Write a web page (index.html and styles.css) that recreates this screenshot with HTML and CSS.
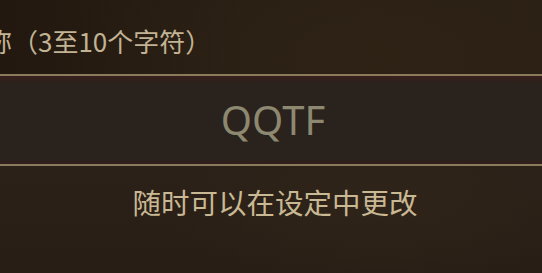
FILE: index.html
```html
<!DOCTYPE html>
<html lang="zh-CN">
<head>
<meta charset="utf-8">
<title>昵称</title>
<link rel="stylesheet" href="styles.css">
</head>
<body>
<div class="screen">
  <div class="header"><span class="label">称（3至10个字符）</span></div>
  <div class="rule"></div>
  <div class="field"><span class="value">QQTF</span></div>
  <div class="rule"></div>
  <div class="hint">随时可以在设定中更改</div>
</div>
</body>
</html>
```
FILE: styles.css
```css
html, body {
  margin: 0;
  padding: 0;
  width: 542px;
  height: 273px;
  overflow: hidden;
  background: #2a1f16;
}
.screen {
  width: 542px;
  height: 273px;
  display: flex;
  flex-direction: column;
  overflow: hidden;
  font-family: "Noto Sans CJK SC", "Noto Sans", sans-serif;
  background:
    radial-gradient(ellipse 420px 200px at 360px 60px, rgba(48,36,22,0.55), rgba(0,0,0,0) 70%),
    linear-gradient(90deg, #22180f 0%, #2a1f14 45%, #2b2014 100%);
}
.header {
  height: 74px;
  box-sizing: border-box;
  padding-top: 26px;
  white-space: nowrap;
  overflow: hidden;
}
.label {
  display: block;
  margin-left: -14px;
  font-size: 26px;
  line-height: 30px;
  color: #c2b394;
}
.rule {
  height: 2px;
  background: #8b7a5c;
  flex: none;
}
.field {
  height: 88px;
  display: flex;
  align-items: center;
  justify-content: center;
  background:
    linear-gradient(180deg, rgba(70,30,26,0.55) 0px, rgba(42,34,29,0) 8px, rgba(42,34,29,0) 82px, rgba(60,28,24,0.45) 88px),
    #29221d;
}
.value {
  font-family: "Noto Sans", sans-serif;
  font-size: 40px;
  line-height: 48px;
  color: #8d8870;
  padding-left: 4px;
}
.hint {
  flex: 1;
  text-align: center;
  padding-top: 17px;
  padding-left: 8px;
  font-size: 28.5px;
  line-height: 38px;
  color: #c8b893;
  background:
    radial-gradient(ellipse 300px 120px at 380px 40px, rgba(52,40,28,0.5), rgba(0,0,0,0) 70%),
    linear-gradient(180deg, #2c2118 0%, #281e15 100%);
}
```
